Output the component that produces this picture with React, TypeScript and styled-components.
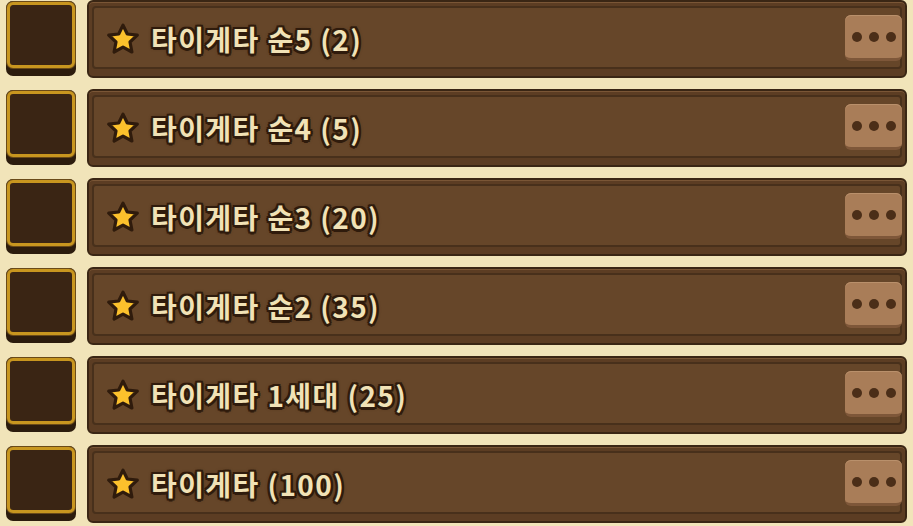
import React from "react";
import styled, { createGlobalStyle } from "styled-components";

const items = [
  "타이게타 순5 (2)",
  "타이게타 순4 (5)",
  "타이게타 순3 (20)",
  "타이게타 순2 (35)",
  "타이게타 1세대 (25)",
  "타이게타 (100)",
];

const Star = () => (
  <svg width="34" height="32" viewBox="0 0 34 32">
    <polygon
      points="17,2.2 21.3,11 31.3,12.2 24,19 25.9,29 17,24.2 8.1,29 10,19 2.7,12.2 12.7,11"
      fill="#fcc12c"
      stroke="#2f1b0c"
      strokeWidth="3.2"
      strokeLinejoin="round"
    />
  </svg>
);

const App = () => {
  return (
    <>
      <GlobalStyle />
      <List>
        {items.map((label) => (
          <Row key={label}>
            <Slot>
              <SlotInner />
            </Slot>
            <Panel>
              <Face>
                <Title>
                  <Star />
                  <Label>{label}</Label>
                </Title>
                <MoreButton>
                  <Dot />
                  <Dot />
                  <Dot />
                </MoreButton>
              </Face>
            </Panel>
          </Row>
        ))}
      </List>
    </>
  );
};

export default App;

const GlobalStyle = createGlobalStyle`
  body {
    margin: 0;
    background: #f1e4b9;
    font-family: "Noto Sans CJK KR", "Noto Sans", sans-serif;
  }
`;

const List = styled.div`
  display: flex;
  flex-direction: column;
  gap: 11px;
  width: 913px;
  height: 526px;
  overflow: hidden;
`;

const Row = styled.div`
  display: flex;
  align-items: flex-start;
  height: 78px;
  padding-left: 6px;
`;

const Slot = styled.div`
  box-sizing: border-box;
  width: 70px;
  height: 75px;
  margin-top: 1px;
  border-radius: 7px;
  background: #2c1c0d;
  padding: 1px 1px 8px 1px;
  flex-shrink: 0;
`;

const SlotInner = styled.div`
  box-sizing: border-box;
  width: 100%;
  height: 100%;
  border: 3px solid #c8961f;
  border-radius: 6px;
  background: #3a2514;
  box-shadow: 0 0 0 1px #6a4a18;
`;

const Panel = styled.div`
  box-sizing: border-box;
  margin-left: 11px;
  width: 820px;
  height: 78px;
  border: 2px solid #3a2614;
  border-radius: 6px;
  background: #5c3d23;
  padding: 4px 3px 7px 3px;
  box-shadow: inset 0 1px 0 #7a5636;
`;

const Face = styled.div`
  box-sizing: border-box;
  display: flex;
  align-items: center;
  height: 100%;
  border: 2px solid #48301b;
  border-radius: 4px;
  background: #664629;
  padding: 0 0 0 12px;
`;

const Title = styled.div`
  display: flex;
  align-items: center;
  padding-top: 2px;
`;

const Label = styled.span`
  margin-left: 11px;
  font-size: 28px;
  font-weight: 700;
  line-height: 1;
  color: #f1e2b6;
  letter-spacing: 1.4px;
  text-shadow: 2.5px 0 0 #2f1b0c, -2.5px 0 0 #2f1b0c, 0 2.5px 0 #2f1b0c,
    0 -2.5px 0 #2f1b0c, 2px 2px 0 #2f1b0c, -2px 2px 0 #2f1b0c,
    2px -2px 0 #2f1b0c, -2px -2px 0 #2f1b0c, 0 0 4px #2f1b0c;
`;

const MoreButton = styled.div`
  box-sizing: border-box;
  margin-left: auto;
  margin-right: -2px;
  display: flex;
  align-items: center;
  justify-content: center;
  gap: 7px;
  width: 57px;
  height: 46px;
  padding-top: 2px;
  border-radius: 6px;
  background: #a97d58;
  border-bottom: 3px solid #7e5739;
  box-shadow: inset 0 1px 0 #b9906b;
`;

const Dot = styled.span`
  width: 10px;
  height: 10px;
  border-radius: 50%;
  background: #4b2e18;
`;
